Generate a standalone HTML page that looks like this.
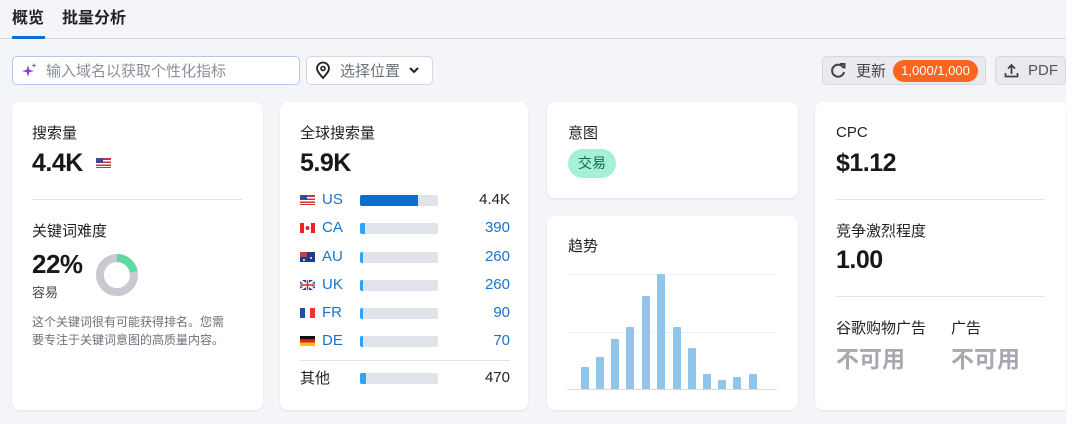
<!DOCTYPE html>
<html><head><meta charset="utf-8"><style>
*{box-sizing:border-box;margin:0;padding:0}
body{width:1080px;height:424px;background:#f4f5f9;font-family:"Liberation Sans","Noto Sans CJK SC",sans-serif;color:#333;position:relative;overflow:hidden;line-height:20px}
.a{position:absolute}
.card{position:absolute;background:#fff;border-radius:8px;box-shadow:0 1px 2px rgba(0,0,0,.08)}
.lbl{font-size:15px;color:#222;line-height:20px}
.big{font-size:25px;font-weight:bold;color:#181818;letter-spacing:-0.5px;line-height:30px}
.row{position:absolute;left:20px;width:210px;height:20px;font-size:15px;line-height:20px}
.row .c{position:absolute;left:22px;top:0;color:#1a73c8}
.row .fl{position:absolute;left:0;top:5px;width:15px;height:10px}
.row .bar{position:absolute;left:60px;top:5px;width:78px;height:11px;background:#e1e3ea;border-radius:2px;overflow:hidden}
.row .bar i{display:block;height:100%;background:#2aa7f0}
.row .v{position:absolute;right:0;top:0;color:#1a73c8}
.tb{position:absolute;width:8px;background:#92c5ea;border-radius:1px 1px 0 0}
</style></head><body>
<div class="a" style="left:12px;top:9px;font-size:16px;font-weight:bold;color:#222">概览</div>
<div class="a" style="left:62px;top:9px;font-size:16px;font-weight:bold;color:#222">批量分析</div>
<div class="a" style="left:0;top:38px;width:1066px;height:1px;background:#d6d8de"></div>
<div class="a" style="left:12px;top:36px;width:33px;height:3px;background:#0a6fd0"></div>
<div class="a" style="left:1066px;top:0;width:14px;height:424px;background:#fff"></div>

<div class="a" style="left:12px;top:56px;width:288px;height:29px;border:1px solid #b9c3f2;border-radius:5px;background:#fff"></div>
<svg class="a" style="left:21px;top:62px" width="17" height="17" viewBox="0 0 17 17"><path d="M7 3 L8.3 7.7 L13 9 L8.3 10.3 L7 15 L5.7 10.3 L1 9 L5.7 7.7Z" fill="#8a3ee0"/><path d="M13 1 L13.6 2.9 L15.5 3.5 L13.6 4.1 L13 6 L12.4 4.1 L10.5 3.5 L12.4 2.9Z" fill="#8a3ee0"/></svg>
<div class="a" style="left:46px;top:62px;font-size:15px;color:#8b8f98">输入域名以获取个性化指标</div>
<div class="a" style="left:306px;top:56px;width:127px;height:29px;border:1px solid #d6d8de;border-radius:5px;background:#fff"></div>
<svg class="a" style="left:314px;top:61px" width="18" height="19" viewBox="0 0 18 19"><path d="M9 17 C5 12.5 3 10 3 7.5 A6 6 0 0 1 15 7.5 C15 10 13 12.5 9 17Z" fill="none" stroke="#222" stroke-width="1.8"/><circle cx="9" cy="7.5" r="2" fill="none" stroke="#222" stroke-width="1.6"/></svg>
<div class="a" style="left:340px;top:62px;font-size:15px;color:#6b6f78">选择位置</div>
<svg class="a" style="left:408px;top:66px" width="12" height="9" viewBox="0 0 12 9"><path d="M2 2 L6 6 L10 2" fill="none" stroke="#222" stroke-width="2"/></svg>

<div class="a" style="left:822px;top:56px;width:164px;height:29px;border:1px solid #d6d8de;border-radius:5px;background:#e9eaee"></div>
<svg class="a" style="left:830px;top:62px" width="17" height="17" viewBox="0 0 17 17"><path d="M13.5 6 A6 6 0 1 0 14 10" fill="none" stroke="#444" stroke-width="2"/><path d="M10 2 L14.5 2 L14.5 6.5" fill="none" stroke="#444" stroke-width="2"/></svg>
<div class="a" style="left:856px;top:62px;font-size:15px;color:#444">更新</div>
<div class="a" style="left:893px;top:60px;width:85px;height:22px;border-radius:11px;background:#ff6421;color:#fff;font-size:13px;line-height:22px;text-align:center">1,000/1,000</div>
<div class="a" style="left:995px;top:56px;width:71px;height:29px;border:1px solid #d6d8de;border-radius:5px;background:#e9eaee"></div>
<svg class="a" style="left:1003px;top:62px" width="17" height="17" viewBox="0 0 17 17"><path d="M8.5 12 V3 M5 6.5 L8.5 3 L12 6.5 M2.5 11 V14.5 H14.5 V11" fill="none" stroke="#444" stroke-width="1.8"/></svg>
<div class="a" style="left:1028px;top:61px;font-size:15px;color:#555">PDF</div>

<!-- card1 -->
<div class="card" style="left:12px;top:102px;width:251px;height:308px">
 <div class="a lbl" style="left:20px;top:22px">搜索量</div>
 <div class="a big" style="left:20px;top:46px">4.4K</div>
 <svg class="a" style="left:84px;top:56px" width="15" height="10"><rect width="15" height="10" fill="#c33"/><rect y="2" width="15" height="1.5" fill="#fff"/><rect y="5" width="15" height="1.5" fill="#fff"/><rect y="8" width="15" height="1" fill="#fff"/><rect width="7" height="5" fill="#3a4a9a"/></svg>
 <div class="a" style="left:20px;top:97px;width:210px;height:1px;background:#e1e3e8"></div>
 <div class="a lbl" style="left:20px;top:120px">关键词难度</div>
 <div class="a big" style="left:20px;top:147px;font-size:26px">22%</div>
 <div class="a" style="left:20px;top:181px;font-size:13px;color:#444">容易</div>
 <svg class="a" style="left:82px;top:150px" width="46" height="46" viewBox="0 0 46 46"><circle cx="23" cy="23" r="17" fill="none" stroke="#c8cacf" stroke-width="8"/><circle cx="23" cy="23" r="17" fill="none" stroke="#5dd9a3" stroke-width="8" stroke-dasharray="23.5 200" transform="rotate(-90 23 23)"/></svg>
 <div class="a" style="left:20px;top:211px;width:203px;font-size:12px;line-height:18px;color:#6b6f78">这个关键词很有可能获得排名。您需要专注于关键词意图的高质量内容。</div>
</div>

<!-- card2 -->
<div class="card" style="left:280px;top:102px;width:248px;height:308px">
 <div class="a lbl" style="left:20px;top:22px">全球搜索量</div>
 <div class="a big" style="left:20px;top:46px">5.9K</div>
 <div class="row" style="top:88px"><svg class="fl" viewBox="0 0 15 10"><rect width="15" height="10" fill="#c33"/><rect y="2" width="15" height="1.5" fill="#fff"/><rect y="5" width="15" height="1.5" fill="#fff"/><rect y="8" width="15" height="1" fill="#fff"/><rect width="7" height="5" fill="#3a4a9a"/></svg><span class="c">US</span><div class="bar"><i style="width:58px;background:#0a6fd0"></i></div><span class="v" style="color:#222">4.4K</span></div>
 <div class="row" style="top:116px"><svg class="fl" viewBox="0 0 15 10"><rect width="15" height="10" fill="#e22"/><rect x="4" width="7" height="10" fill="#fff"/><circle cx="7.5" cy="5" r="2" fill="#e22"/></svg><span class="c">CA</span><div class="bar"><i style="width:5px"></i></div><span class="v">390</span></div>
 <div class="row" style="top:145px"><svg class="fl" viewBox="0 0 15 10"><rect width="15" height="10" fill="#1e3a8a"/><rect width="7" height="5" fill="#b44"/><circle cx="11" cy="6" r="1" fill="#fff"/><circle cx="4" cy="8" r="1" fill="#fff"/></svg><span class="c">AU</span><div class="bar"><i style="width:3px"></i></div><span class="v">260</span></div>
 <div class="row" style="top:173px"><svg class="fl" viewBox="0 0 15 10"><rect width="15" height="10" fill="#2a3f8f"/><path d="M0 0L15 10M15 0L0 10" stroke="#fff" stroke-width="2"/><path d="M7.5 0V10M0 5H15" stroke="#fff" stroke-width="3"/><path d="M7.5 0V10M0 5H15" stroke="#c33" stroke-width="1.5"/></svg><span class="c">UK</span><div class="bar"><i style="width:3px"></i></div><span class="v">260</span></div>
 <div class="row" style="top:201px"><svg class="fl" viewBox="0 0 15 10"><rect width="5" height="10" fill="#1f4fa8"/><rect x="5" width="5" height="10" fill="#fff"/><rect x="10" width="5" height="10" fill="#e33"/></svg><span class="c">FR</span><div class="bar"><i style="width:3px"></i></div><span class="v">90</span></div>
 <div class="row" style="top:229px"><svg class="fl" viewBox="0 0 15 10"><rect width="15" height="3.4" fill="#111"/><rect y="3.3" width="15" height="3.4" fill="#d22"/><rect y="6.6" width="15" height="3.4" fill="#f5c400"/></svg><span class="c">DE</span><div class="bar"><i style="width:3px"></i></div><span class="v">70</span></div>
 <div class="a" style="left:20px;top:258px;width:210px;height:1px;background:#e1e3e8"></div>
 <div class="row" style="top:266px"><span style="position:absolute;left:0;top:1px;color:#222">其他</span><div class="bar"><i style="width:6px"></i></div><span class="v" style="color:#222">470</span></div>
</div>

<!-- card3 -->
<div class="card" style="left:547px;top:102px;width:251px;height:96px">
 <div class="a lbl" style="left:21px;top:22px">意图</div>
 <div class="a" style="left:21px;top:47px;width:48px;height:29px;border-radius:15px;background:#a6f0d6;color:#0d6b4e;font-size:14px;line-height:29px;text-align:center">交易</div>
</div>
<div class="card" style="left:547px;top:216px;width:251px;height:194px">
 <div class="a lbl" style="left:21px;top:21px">趋势</div>
</div>
<div class="a" style="left:567px;top:274px;width:210px;height:1px;background:#eef0f3"></div>
<div class="a" style="left:567px;top:332px;width:210px;height:1px;background:#eef0f3"></div>
<div class="a" style="left:567px;top:389px;width:210px;height:1px;background:#d9dbe0"></div>
<div class="tb" style="left:581px;top:367px;height:22px"></div>
<div class="tb" style="left:596px;top:357px;height:32px"></div>
<div class="tb" style="left:611px;top:339px;height:50px"></div>
<div class="tb" style="left:626px;top:327px;height:62px"></div>
<div class="tb" style="left:642px;top:296px;height:93px"></div>
<div class="tb" style="left:657px;top:274px;height:115px"></div>
<div class="tb" style="left:673px;top:327px;height:62px"></div>
<div class="tb" style="left:688px;top:348px;height:41px"></div>
<div class="tb" style="left:703px;top:374px;height:15px"></div>
<div class="tb" style="left:718px;top:380px;height:9px"></div>
<div class="tb" style="left:733px;top:377px;height:12px"></div>
<div class="tb" style="left:749px;top:374px;height:15px"></div>

<!-- card4 -->
<div class="card" style="left:815px;top:102px;width:251px;height:308px;border-radius:8px 0 0 8px">
 <div class="a lbl" style="left:21px;top:21px">CPC</div>
 <div class="a big" style="left:21px;top:46px">$1.12</div>
 <div class="a" style="left:21px;top:97px;width:209px;height:1px;background:#e1e3e8"></div>
 <div class="a lbl" style="left:21px;top:120px">竞争激烈程度</div>
 <div class="a big" style="left:21px;top:143px">1.00</div>
 <div class="a" style="left:21px;top:194px;width:209px;height:1px;background:#e1e3e8"></div>
 <div class="a lbl" style="left:21px;top:217px">谷歌购物广告</div>
 <div class="a lbl" style="left:136px;top:217px">广告</div>
 <div class="a" style="left:21px;top:242px;font-size:23px;font-weight:bold;color:#a7a9b0;line-height:30px">不可用</div>
 <div class="a" style="left:136px;top:242px;font-size:23px;font-weight:bold;color:#a7a9b0;line-height:30px">不可用</div>
</div>
</body></html>
